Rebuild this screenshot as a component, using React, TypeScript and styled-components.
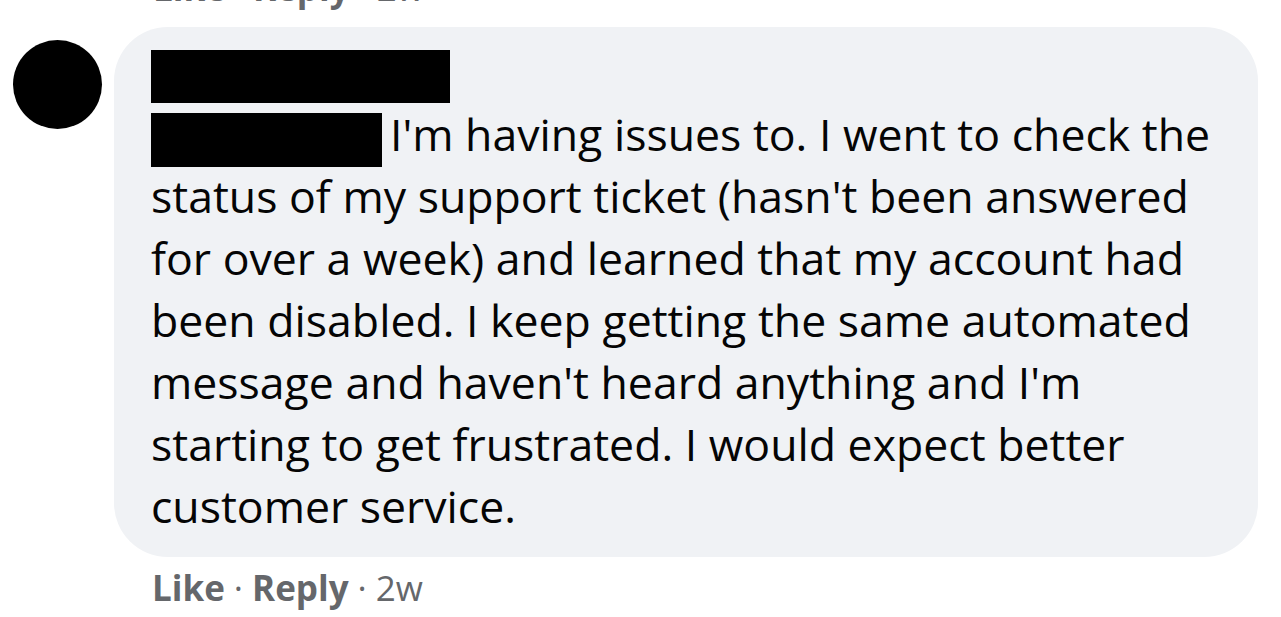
import React from 'react';
import styled, { createGlobalStyle } from 'styled-components';

const Global = createGlobalStyle`
  html, body { margin: 0; padding: 0; background: #fff; }
  body { font-family: "Open Sans", "Noto Sans", Arial, sans-serif; overflow: hidden; }
`;

const Page = styled.div`
  width: 1281px;
  height: 617px;
  overflow: hidden;
`;

const Actions = styled.div<{ $top?: boolean }>`
  display: flex;
  align-items: baseline;
  gap: 9px;
  font-size: 35px;
  line-height: 50px;
  color: #65676b;
  padding-left: ${({ $top }) => ($top ? '153px' : '38px')};
  margin-top: ${({ $top }) => ($top ? '-37px' : '6px')};
`;

const Action = styled.span`
  font-weight: 700;
`;

const Dot = styled.span`
  font-weight: 400;
`;

const Time = styled.span`
  font-weight: 400;
`;

const Row = styled.div`
  display: flex;
  align-items: flex-start;
  gap: 12px;
  padding-left: 13px;
  margin-top: 14px;
`;

const Avatar = styled.div`
  width: 89px;
  height: 89px;
  border-radius: 50%;
  background: #000;
  margin-top: 13px;
  flex: none;
`;

const Column = styled.div`
  display: flex;
  flex-direction: column;
`;

const Bubble = styled.div`
  width: 1144px;
  box-sizing: border-box;
  background: #f0f2f5;
  border-radius: 54px;
  padding: 23px 0 20px 37px;
`;

const Redact = styled.span<{ $w: number; $h: number; $dy?: number }>`
  display: inline-block;
  width: ${({ $w }) => $w}px;
  height: ${({ $h }) => $h}px;
  background: #000;
  flex: none;
  transform: translateY(${({ $dy }) => $dy ?? 0}px);
`;

const Name = styled.div`
  height: 53px;
  display: flex;
  align-items: flex-start;
`;

const Body = styled.div`
  font-size: 44.6px;
  line-height: 62px;
  color: #050505;
  white-space: nowrap;
`;

const Line = styled.div`
  display: flex;
  align-items: center;
  gap: 8px;
`;

const Footer = () => (
  <>
    <Action>Like</Action>
    <Dot>·</Dot>
    <Action>Reply</Action>
    <Dot>·</Dot>
    <Time>2w</Time>
  </>
);

export default function App() {
  return (
    <Page>
      <Global />
      <Actions $top>
        <Footer />
      </Actions>
      <Row>
        <Avatar />
        <Column>
          <Bubble>
            <Name>
              <Redact $w={299} $h={53} />
            </Name>
            <Body>
              <Line>
                <Redact $w={231} $h={54} $dy={6} />
                <span>I'm having issues to. I went to check the</span>
              </Line>
              <Line>status of my support ticket (hasn't been answered</Line>
              <Line>for over a week) and learned that my account had</Line>
              <Line>been disabled. I keep getting the same automated</Line>
              <Line>message and haven't heard anything and I'm</Line>
              <Line>starting to get frustrated. I would expect better</Line>
              <Line>customer service.</Line>
            </Body>
          </Bubble>
          <Actions>
            <Footer />
          </Actions>
        </Column>
      </Row>
    </Page>
  );
}
